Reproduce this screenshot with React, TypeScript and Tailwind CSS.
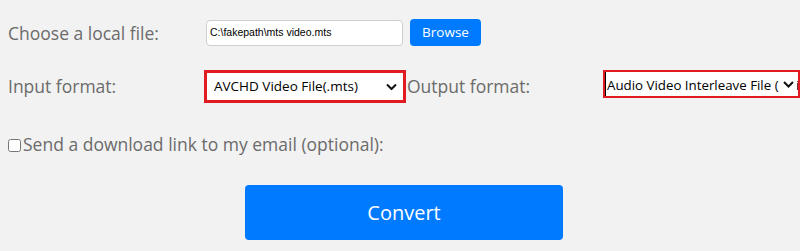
import React from 'react';

function Chevron() {
  return (
    <span className="pointer-events-none absolute right-[1px] top-[2px] bottom-[2px] w-[18px] bg-white flex items-center justify-center">
      <svg width="11" height="7" viewBox="0 0 11 7" fill="none">
        <path d="M1 1l4.5 4.5L10 1" stroke="#111" strokeWidth="2" />
      </svg>
    </span>
  );
}

export default function App() {
  return (
    <div className="w-[800px] h-[251px] overflow-hidden bg-[#f2f2f2] text-[#6b6b6b] font-['Open_Sans',sans-serif]">
      {/* file row */}
      <div className="flex items-center pl-[8px] pt-[19px]">
        <label className="w-[198px] text-[17.5px] leading-[26px]">Choose a local file:</label>
        <div className="w-[197px] h-[26px] bg-white border border-[#cfcfcf] rounded-[4px] flex items-center pl-[3px] text-[10.5px] text-black font-['Liberation_Sans',Arial,sans-serif]">
          C:\fakepath\mts video.mts
        </div>
        <button className="ml-[7px] w-[71px] h-[27px] bg-[#007bff] text-white rounded-[4px] text-[13.5px] font-medium leading-none">
          Browse
        </button>
      </div>

      {/* format row */}
      <div className="flex items-center pl-[8px] mt-[24px]">
        <label className="w-[196px] text-[17.5px]">Input format:</label>
        <div className="relative w-[202px] h-[33px] border-[3px] border-[#e11b22] bg-white">
          <select className="appearance-none w-full h-full bg-white pl-[7px] pr-[24px] text-[13.5px] text-black outline-none">
            <option>AVCHD Video File(.mts)</option>
          </select>
          <span className="pointer-events-none absolute right-[6px] top-1/2 -translate-y-1/2 flex">
            <svg width="11" height="7" viewBox="0 0 11 7" fill="none">
              <path d="M1 1l4.5 4.5L10 1" stroke="#111" strokeWidth="2" />
            </svg>
          </span>
        </div>
        <label className="w-[197px] pl-[1px] text-[17.5px]">Output format:</label>
        <div className="relative w-[197px] h-[28px] mt-[-5px] border-[2px] border-[#e11b22] bg-white shrink-0 overflow-hidden">
          <div className="absolute left-0 top-0 bottom-0 w-[1px] bg-black" />
          <select className="appearance-none w-[210px] h-full bg-white pl-[2px] text-[13.3px] text-black outline-none">
            <option>Audio Video Interleave File (.avi)</option>
          </select>
          <Chevron />
        </div>
      </div>

      {/* email row */}
      <div className="flex items-center pl-[8px] mt-[28px]">
        <input type="checkbox" className="m-0 w-[13px] h-[13px] mt-[3px]" />
        <span className="ml-[2px] text-[17.5px]">Send a download link to my email (optional):</span>
      </div>

      {/* convert */}
      <div className="flex pl-[245px] mt-[28px]">
        <button className="w-[318px] h-[55px] bg-[#007bff] text-white rounded-[4px] text-[20px]">
          Convert
        </button>
      </div>
    </div>
  );
}
